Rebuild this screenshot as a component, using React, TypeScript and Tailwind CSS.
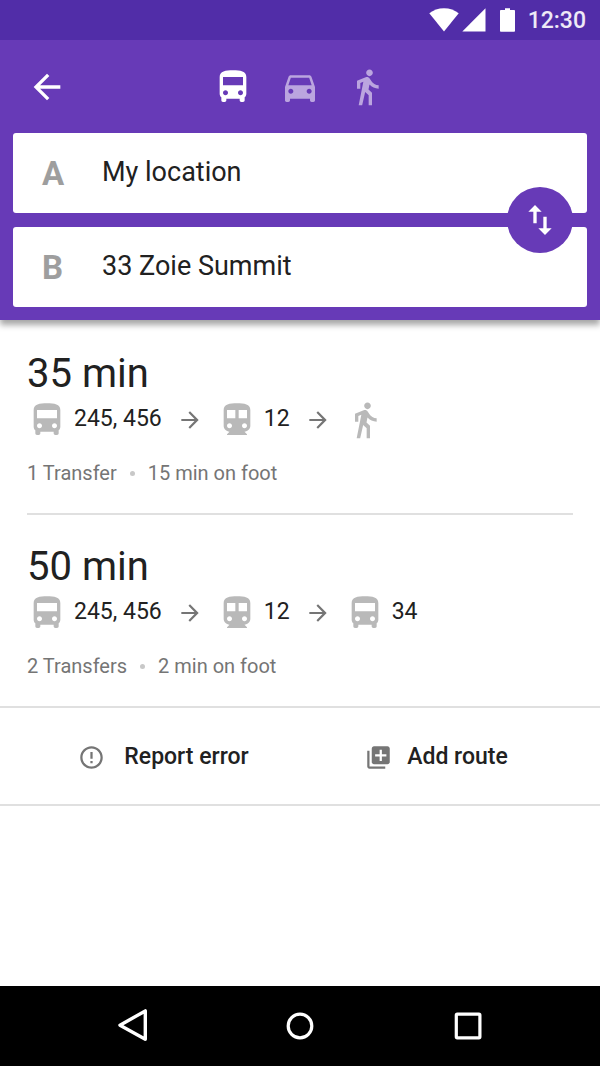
import { useState } from "react";

const PATHS = {
  back: "M20 11H7.83l5.59-5.59L12 4l-8 8 8 8 1.41-1.41L7.83 13H20v-2z",
  forward: "M12 4l-1.41 1.41L16.17 11H4v2h12.17l-5.58 5.59L12 20l8-8z",
  bus: "M4 16c0 .88.39 1.67 1 2.22V20c0 .55.45 1 1 1h1c.55 0 1-.45 1-1v-1h8v1c0 .55.45 1 1 1h1c.55 0 1-.45 1-1v-1.78c.61-.55 1-1.34 1-2.22V6c0-3.5-3.58-4-8-4s-8 .5-8 4v10zm3.5 1c-.83 0-1.5-.67-1.5-1.5S6.67 14 7.5 14s1.5.67 1.5 1.5S8.33 17 7.5 17zm9 0c-.83 0-1.5-.67-1.5-1.5s.67-1.5 1.5-1.5 1.5.67 1.5 1.5-.67 1.5-1.5 1.5zm1.5-6H6V6h12v5z",
  car: "M18.92 6.01C18.72 5.42 18.16 5 17.5 5h-11c-.66 0-1.21.42-1.42 1.01L3 12v8c0 .55.45 1 1 1h1c.55 0 1-.45 1-1v-1h12v1c0 .55.45 1 1 1h1c.55 0 1-.45 1-1v-8l-2.08-5.99zM6.5 16c-.83 0-1.5-.67-1.5-1.5S5.67 13 6.5 13s1.5.67 1.5 1.5S7.33 16 6.5 16zm11 0c-.83 0-1.5-.67-1.5-1.5s.67-1.5 1.5-1.5 1.5.67 1.5 1.5-.67 1.5-1.5 1.5zM5 11l1.5-4.5h11L19 11H5z",
  walk: "M13.5 5.5c1.1 0 2-.9 2-2s-.9-2-2-2-2 .9-2 2 .9 2 2 2zM9.8 8.9L7 23h2.1l1.8-8 2.1 2v6h2v-7.5l-2.1-2 .6-3C14.8 12 16.8 13 19 13v-2c-1.9 0-3.5-1-4.3-2.4l-1-1.6c-.4-.6-1-1-1.7-1-.3 0-.5.1-.8.1L6 8.3V13h2V9.6l1.8-.7z",
  train: "M12 2c-4.42 0-8 .5-8 4v9.5C4 17.43 5.57 19 7.5 19L6 20.5v.5h12v-.5L16.5 19c1.93 0 3.5-1.57 3.5-3.5V6c0-3.5-3.58-4-8-4zM7.5 17c-.83 0-1.5-.67-1.5-1.5S6.67 14 7.5 14s1.5.67 1.5 1.5S8.33 17 7.5 17zm3.5-6H6V6h5v5zm5.5 6c-.83 0-1.5-.67-1.5-1.5s.67-1.5 1.5-1.5 1.5.67 1.5 1.5-.67 1.5-1.5 1.5zm1.5-6h-5V6h5v5z",
  swap: "M16 17.01V10h-2v7.01h-3L15 21l4-3.99h-3zM9 3L5 6.99h3V14h2V6.99h3L9 3z",
  error: "M11 15h2v2h-2zm0-8h2v6h-2zm.99-5C6.47 2 2 6.48 2 12s4.47 10 9.99 10C17.52 22 22 17.52 22 12S17.52 2 11.99 2zM12 20c-4.42 0-8-3.58-8-8s3.58-8 8-8 8 3.58 8 8-3.58 8-8 8z",
  add: "M4 6H2v14c0 1.1.9 2 2 2h14v-2H4V6zm16-4H8c-1.1 0-2 .9-2 2v12c0 1.1.9 2 2 2h12c1.1 0 2-.9 2-2V4c0-1.1-.9-2-2-2zm-1 9h-4v4h-2v-4H9V9h4V5h2v4h4v2z",
};

type IconName = keyof typeof PATHS;

function Icon({ name, className = "size-10" }: { name: IconName; className?: string }) {
  return (
    <svg viewBox="0 0 24 24" fill="currentColor" aria-hidden="true" className={`shrink-0 ${className}`}>
      <path d={PATHS[name]} />
    </svg>
  );
}

type Leg = { icon: IconName; lines?: string };
type Route = { time: string; legs: Leg[]; transfers: string; foot: string };

const ROUTES: Route[] = [
  {
    time: "35 min",
    legs: [{ icon: "bus", lines: "245, 456" }, { icon: "train", lines: "12" }, { icon: "walk" }],
    transfers: "1 Transfer",
    foot: "15 min on foot",
  },
  {
    time: "50 min",
    legs: [
      { icon: "bus", lines: "245, 456" },
      { icon: "train", lines: "12" },
      { icon: "bus", lines: "34" },
    ],
    transfers: "2 Transfers",
    foot: "2 min on foot",
  },
];

const MODES: { icon: IconName; label: string }[] = [
  { icon: "bus", label: "Transit" },
  { icon: "car", label: "Drive" },
  { icon: "walk", label: "Walk" },
];

function StatusBar() {
  return (
    <div className="flex h-10 items-center justify-end bg-[#512da8] pr-[14px] text-white">
      <svg viewBox="0 0 30 24" fill="currentColor" aria-hidden="true" className="h-6 w-[30px]">
        <path d="M15 23.5L.3 5.3C4.3 2 9.3.2 15 .2s10.700 1.800 14.700 5.100z" />
      </svg>
      <svg viewBox="0 0 24 24" fill="currentColor" aria-hidden="true" className="ml-[3px] size-6">
        <path d="M.3 23.500L23.500.3v23.200z" />
      </svg>
      <svg viewBox="0 0 15 24" fill="currentColor" aria-hidden="true" className="ml-[14px] h-6 w-[15px]">
        <path d="M5 .3h5v1.700h4.200c.4 0 .8.400.8.800v20.100c0 .400-.4.800-.8.800H.8c-.4 0-.8-.4-.8-.8V2.800C0 2.400.4 2 .8 2H5z" />
      </svg>
      <span className="ml-[13px] pt-[2px] text-[23px] leading-7 font-medium text-white/90">12:30</span>
    </div>
  );
}

function PlaceField({
  id,
  letter,
  name,
  value,
  onChange,
}: {
  id: string;
  letter: string;
  name: string;
  value: string;
  onChange: (value: string) => void;
}) {
  return (
    <div className="flex h-20 items-center rounded-[3px] bg-white pl-[29px]">
      <label htmlFor={id} className="w-[60px] pt-[1px] text-[33px] leading-10 font-bold text-[#9e9e9e]">
        {letter}
      </label>
      <input
        id={id}
        type="text"
        aria-label={name}
        value={value}
        onChange={(e) => onChange(e.target.value)}
        className="mr-20 h-10 min-w-0 flex-1 bg-transparent pb-[2px] text-[27px] text-[#212121] outline-none"
      />
    </div>
  );
}

function RouteItem({ route }: { route: Route }) {
  return (
    <li className="mx-[27px] border-[#e0e0e0] pt-8 pb-7 not-first:border-t-2 not-first:pt-[30px]">
      <h2 className="text-[40px] leading-[44px]">{route.time}</h2>
      <div className="mt-1 flex items-center text-[23px] leading-[38px]">
        {route.legs.map((leg, i) => (
          <div key={i} className="flex items-center">
            {i > 0 && <Icon name="forward" className="mr-[14px] ml-[15px] size-[26px] text-[#757575]" />}
            <Icon name={leg.icon} className="size-10 text-[#b9b9b9]" />
            {leg.lines && <span className="ml-[7px] pb-[2px]">{leg.lines}</span>}
          </div>
        ))}
      </div>
      <p className="mt-[21px] flex items-center text-[20px] leading-6 text-[#757575]">
        <span>{route.transfers}</span>
        <span className="mx-[13px] size-[5px] rounded-full bg-[#c8c8c8]" />
        <span>{route.foot}</span>
      </p>
    </li>
  );
}

export default function App() {
  const [mode, setMode] = useState<IconName>("bus");
  const [from, setFrom] = useState("My location");
  const [to, setTo] = useState("33 Zoie Summit");

  const swap = () => {
    setFrom(to);
    setTo(from);
  };

  return (
    <div className="flex min-h-screen flex-col bg-white font-[Roboto,sans-serif] text-[#212121]">
      <header className="bg-[#673ab7] shadow-[0_5px_6px_rgba(0,0,0,0.35)]">
        <StatusBar />
        <div className="grid h-[93px] grid-cols-[1fr_auto_1fr] items-center px-[27px] text-white">
          <button type="button" aria-label="Back" className="justify-self-start">
            <Icon name="back" />
          </button>
          <nav aria-label="Travel mode" className="flex gap-[27px]">
            {MODES.map((m) => (
              <button
                key={m.icon}
                type="button"
                aria-label={m.label}
                aria-pressed={mode === m.icon}
                onClick={() => setMode(m.icon)}
                className={mode === m.icon ? "text-white" : "text-[#bba5df]"}
              >
                <Icon name={m.icon} />
              </button>
            ))}
          </nav>
        </div>
        <div className="relative flex flex-col gap-[14px] px-[13px] pb-[13px]">
          <PlaceField id="from" letter="A" name="Starting point" value={from} onChange={setFrom} />
          <PlaceField id="to" letter="B" name="Destination" value={to} onChange={setTo} />
          <button
            type="button"
            aria-label="Swap places"
            onClick={swap}
            className="absolute top-[54px] right-[27px] flex size-[66px] items-center justify-center rounded-full bg-[#673ab7] text-white"
          >
            <Icon name="swap" />
          </button>
        </div>
      </header>

      <main className="flex-1">
        <ul>
          {ROUTES.map((r) => (
            <RouteItem key={r.time} route={r} />
          ))}
        </ul>
        <div className="grid grid-cols-2 border-y-2 border-[#e0e0e0] px-[27px] text-[23px] font-medium">
          <button type="button" className="flex h-24 items-center justify-center gap-[19px] pt-[3px]">
            <Icon name="error" className="size-[27px] text-[#757575]" />
            Report error
          </button>
          <button type="button" className="flex h-24 items-center justify-center gap-[15px] pt-[3px]">
            <Icon name="add" className="size-[27px] text-[#757575]" />
            Add route
          </button>
        </div>
      </main>

      <footer className="flex h-20 items-center justify-center gap-32 bg-black text-white">
        <button type="button" aria-label="System back">
          <svg viewBox="0 0 40 40" fill="none" stroke="currentColor" strokeWidth="3.4" strokeLinejoin="round" className="size-10">
            <path d="M33.300 4.900v28.400L8 19.200z" />
          </svg>
        </button>
        <button type="button" aria-label="Home">
          <svg viewBox="0 0 40 40" fill="none" stroke="currentColor" strokeWidth="3.2" className="size-10">
            <circle cx="20" cy="20" r="11.800" />
          </svg>
        </button>
        <button type="button" aria-label="Recent apps">
          <svg viewBox="0 0 40 40" fill="none" stroke="currentColor" strokeWidth="3.2" strokeLinejoin="round" className="size-10">
            <rect x="8.300" y="8.200" width="23.600" height="23.600" rx="1" />
          </svg>
        </button>
      </footer>
    </div>
  );
}
